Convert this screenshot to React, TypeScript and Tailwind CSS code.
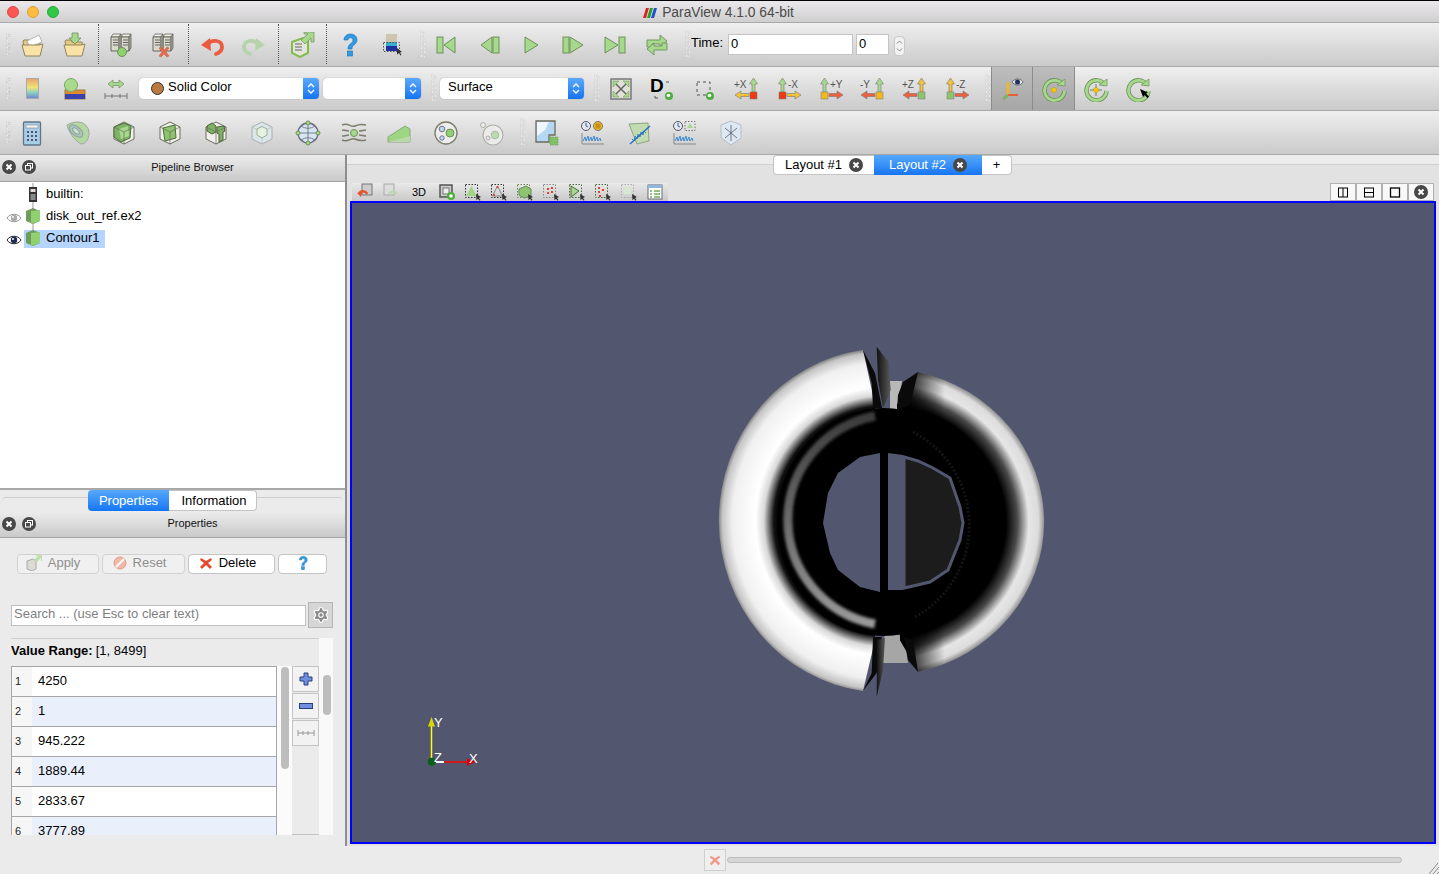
import type { ReactNode } from "react";
import { Settings } from "lucide-react";

const G = "#a6d98c";
const GS = "#6f8f5c";
const OL = "#7c7c6c";

function Ic({ children, s = 26 }: { children: ReactNode; s?: number }) {
  return (
    <svg width={s} height={s} viewBox="0 0 26 26" fill="none">
      {children}
    </svg>
  );
}

function Cell({ children, w = "w-[42px]" }: { children: ReactNode; w?: string }) {
  return <div className={`${w} shrink-0 flex items-center justify-center`}>{children}</div>;
}

function Handle({ className = "" }: { className?: string }) {
  return (
    <div className={`h-full shrink-0 flex items-center justify-end ${className}`}>
      <svg width="6" height="30" viewBox="0 0 6 30">
        {[0, 1, 2, 3, 4, 5, 6].map((i) => (
          <g key={i} fill="#f6f6f6" stroke="#c4c4c4" strokeWidth="0.4">
            <rect x={i % 2 ? 3.5 : 0.5} y={i * 4 + 1} width="2" height="2" />
            <rect x={i % 2 ? 0.5 : 3.5} y={i * 4 + 2} width="1.6" height="1.6" />
          </g>
        ))}
      </svg>
    </div>
  );
}

function Sep() {
  return (
    <div className="w-[6px] shrink-0 h-full flex justify-center">
      <div className="h-[40px] mt-[1px] border-l border-dotted border-[#555]" />
    </div>
  );
}

function Folder({ down }: { down?: boolean }) {
  return (
    <Ic>
      <path d="M4 9l1-1h5l1 2h10v13H6z" fill="#e8c77e" stroke="#8e8565" />
      {down ? (
        <path d="M11 1h6v5h3l-6 6-6-6h3z" fill={G} stroke={GS} strokeWidth="0.8" />
      ) : (
        <path d="M8 9l12-6 3 7-12 5z" fill="#fff" stroke="#999" strokeWidth="0.7" />
      )}
      <path d="M3 13h17l4-1-3 12H6z" fill="#fbe3a8" stroke="#8e8565" />
    </Ic>
  );
}

function Towers({ badge }: { badge?: "ok" | "x" }) {
  const t = (x: number) => (
    <g key={x}>
      <path d={`M${x} 5l2-3h8l-2 3z`} fill="#efefe8" stroke="#66665c" strokeWidth="0.8" />
      <path d={`M${x} 5h8v14h-8z`} fill="#d8d8cf" stroke="#66665c" />
      <path d={`M${x + 8} 5l2-3v14l-2 3z`} fill="#a8a89e" stroke="#66665c" strokeWidth="0.8" />
      <path d={`M${x + 2} 8h5M${x + 2} 10.500h5M${x + 2} 13h5`} stroke="#66665c" strokeWidth="1" />
    </g>
  );
  return (
    <Ic>
      {t(12)}
      {t(2)}
      {badge === "ok" && <circle cx="13" cy="20" r="4.500" fill="#8bd36a" stroke={GS} />}
      {badge === "x" && <path d="M8 16l2-1 3 3 3-3 2 1-3 4 3 4-2 1-3-3-3 3-2-1 3-4z" fill="#ea6a50" stroke="#b85a45" strokeWidth="0.5" />}
    </Ic>
  );
}

function Curved({ flip, color }: { flip?: boolean; color: string }) {
  return (
    <Ic>
      <g transform={flip ? "translate(26 0) scale(-1 1)" : undefined}>
        <path d="M9 12c4-5 14-4 14 3 0 4-3 6-6 7" stroke={color} strokeWidth="3.800" strokeLinecap="round" />
        <path d="M2 13l9-7 1 13z" fill={color} />
      </g>
    </Ic>
  );
}

function Question({ s = 26 }: { s?: number }) {
  return (
    <Ic s={s}>
      <path d="M7 8c0-8 13-8 13 0 0 5-5 4-5 9h-4c0-6 5-5 5-9 0-3-5-3-5 0z" fill="#2f9be6" stroke="#1b6fae" strokeWidth="0.6" />
      <rect x="10.500" y="19" width="5" height="5" fill="#2f9be6" stroke="#1b6fae" strokeWidth="0.6" />
    </Ic>
  );
}

function Vcr({ d, extra }: { d: string; extra?: ReactNode }) {
  return (
    <Ic>
      {extra}
      <path d={d} fill={G} stroke={GS} strokeWidth="1" />
    </Ic>
  );
}

function Axis({ label, up, horiz, box, right }: { label: string; up: string; horiz: string; box: string; right: boolean }) {
  // right: the vertical arrow stands on the right and the flat arrow points left
  return (
    <svg width="26" height="26" viewBox="0 0 26 26" fill="none">
      <g transform={right ? undefined : "translate(26 0) scale(-1 1)"}>
        <path d="M18 16V8h-2.500l4-6 4 6H21v8z" fill={up} stroke="#777" strokeWidth="0.6" />
        <path d="M15 17.500H7V15l-6 4 6 4v-2.500h8z" fill={horiz} stroke="#777" strokeWidth="0.6" />
        <rect x="16" y="16" width="7" height="7" fill={box} stroke="#777" strokeWidth="0.5" />
      </g>
      <text x={right ? 0 : 12} y="12" fontSize="10" fill="#555" fontFamily="Liberation Sans">
        {label}
      </text>
    </svg>
  );
}

function Cube({ kind }: { kind: "plain" | "tilt" | "extract" | "pale" }) {
  if (kind === "pale") {
    return (
      <Ic>
        <path d="M13 2l10 5v12l-10 5-10-5V7z" fill="#dbe6ec" stroke="#a8b0a8" />
        <path d="M3 7l10 5 10-5M13 12v12" stroke="#b8c0b8" strokeWidth="0.7" />
        <path d="M8 9l5-2.500 5 2.500v6l-5 3-5-3z" fill="#e7f1df" stroke="#9ab08f" />
      </Ic>
    );
  }
  return (
    <Ic>
      <path d="M13 2l10 5v12l-10 5-10-5V7z" fill="#f0f0ea" stroke="#6c6c5e" strokeWidth="1" />
      {kind === "plain" && <path d="M3 7l10-4 7 3-1 12-9 4-7-5z" fill="#7fb364" stroke="#4d6f3e" />}
      {kind === "plain" && <path d="M8 9l9-3 1 10-8 3z" fill={G} />}
      {kind === "tilt" && <path d="M6 8l12-3 1 13-11 3z" fill="#8cc470" stroke="#4d6f3e" />}
      {kind === "extract" && <path d="M4 6l5-3 4 3v6l-4 2-5-3zM14 7l7-1 1 5-2 1v8l-4 2v-8l-2-1z" fill="#7fb364" stroke="#4d5f3e" />}
      <path d="M3 7l10 5 10-5M13 12v12" stroke="#6c6c5e" strokeWidth="0.7" />
    </Ic>
  );
}

function Rotate({ inner }: { inner: ReactNode }) {
  return (
    <Ic>
      <path d="M22 9a10 10 0 1 0 1.500 6" stroke={GS} strokeWidth="4.400" />
      <path d="M22 9a10 10 0 1 0 1.500 6" stroke={G} strokeWidth="2.800" />
      <path d="M16 9l8 1V3z" fill={G} stroke={GS} strokeWidth="0.7" />
      {inner}
    </Ic>
  );
}

function CloseDot({ s = 14 }: { s?: number }) {
  return (
    <svg width={s} height={s} viewBox="0 0 14 14">
      <circle cx="7" cy="7" r="7" fill="#484848" />
      <path d="M4.500 4.500l5 5M9.500 4.500l-5 5" stroke="#fff" strokeWidth="2" />
    </svg>
  );
}

function DockHead({ title, h }: { title: string; h: string }) {
  return (
    <div className={`${h} shrink-0 flex items-center pb-[2px] bg-linear-to-b from-[#ececec] to-[#c9c9c9] border-b border-[#a5a5a5]`}>
      <div className="w-[40px] shrink-0 flex items-center gap-[6px] pl-[2px]">
        <CloseDot />
        <svg width="14" height="14" viewBox="0 0 14 14">
          <circle cx="7" cy="7" r="7" fill="#484848" />
          <rect x="5.500" y="3.500" width="5" height="4.500" fill="none" stroke="#fff" />
          <rect x="3.500" y="5.500" width="5" height="4.500" fill="#484848" stroke="#fff" />
        </svg>
      </div>
      <div className="flex-1 text-center text-[11px] text-[#111]">{title}</div>
    </div>
  );
}

function Eye({ on }: { on?: boolean }) {
  return (
    <svg width="16" height="12" viewBox="0 0 16 12">
      <path d="M1 6c3-5 11-5 14 0-3 5-11 5-14 0z" fill="#fff" stroke={on ? "#223" : "#999"} />
      <circle cx="8" cy="6" r="3.200" fill={on ? "#1e2a50" : "#aaa"} />
      <circle cx="7" cy="5" r="1" fill="#fff" />
    </svg>
  );
}

function TreeCube({ last }: { last?: boolean }) {
  return (
    <svg width="16" height="22" viewBox="0 0 16 22">
      <path d={last ? "M8 0v8" : "M8 0v22"} stroke="#999" />
      <path d="M8 3l7 3v10l-7 3-7-3V6z" fill="#6f9c58" />
      <path d="M6 6l9-1v11l-9 3z" fill="#8fd070" />
    </svg>
  );
}

function Combo({ w, pad, children }: { w: string; pad: string; children: ReactNode }) {
  return (
    <div className={`${w} h-[21px] shrink-0 flex rounded-[4px] bg-white shadow-[0_0_1px_#777] overflow-hidden`}>
      <div className={`flex-1 flex items-center text-[13px] text-black pb-[3px] gap-[4px] ${pad}`}>{children}</div>
      <div className="w-[16px] bg-linear-to-b from-[#5aa9fb] to-[#1273f2] flex items-center justify-center">
        <svg width="8" height="13" viewBox="0 0 8 13" fill="none" stroke="#fff" strokeWidth="1.300">
          <path d="M1 5l3-3 3 3M1 8l3 3 3-3" />
        </svg>
      </div>
    </div>
  );
}

function PropBtn({ w, dim, pr = "", children }: { w: string; dim?: boolean; pr?: string; children: ReactNode }) {
  return (
    <div
      className={`${w} h-[20px] shrink-0 rounded-[4px] border flex items-center justify-center gap-[6px] text-[13px] pb-[2px] ${pr} ${
        dim ? "border-[#d2d2d2] bg-[#f0f0f0] text-[#8f8f8f]" : "border-[#c4c4c4] bg-white text-black"
      }`}
    >
      {children}
    </div>
  );
}

function ViewIcon({ children }: { children: ReactNode }) {
  return <div className="w-[26px] shrink-0 flex items-center justify-center">{children}</div>;
}

function SelBox({ fill, cursor = true, dots = "#333", children }: { fill?: string; cursor?: boolean; dots?: string; children?: ReactNode }) {
  return (
    <svg width="18" height="18" viewBox="0 0 18 18" fill="none">
      <rect x="1.500" y="1.500" width="12" height="13" stroke={dots} strokeDasharray="1.500 1.500" />
      {fill && <path d="M7.500 3l5 10h-10z" fill={fill} />}
      {children}
      {cursor && <path d="M12 11l5 3-2 1 1.500 2-1 .7-1.500-2-1.500 1.500z" fill="#333" />}
    </svg>
  );
}

const rows = ["4250", "1", "945.222", "1889.44", "2833.67", "3777.89"];

function Model() {
  return (
    <svg className="block w-full h-full" viewBox="352 203 1082 639">
      <defs>
        <radialGradient id="lb" gradientUnits="userSpaceOnUse" cx="885" cy="521" r="166" gradientTransform="translate(885 521) scale(1 1.036) translate(-885 -521)">
          <stop offset="0.64" stopColor="#000" />
          <stop offset="0.67" stopColor="#111" />
          <stop offset="0.73" stopColor="#d8d8d8" />
          <stop offset="0.78" stopColor="#fff" />
          <stop offset="0.92" stopColor="#f0f0f0" />
          <stop offset="0.98" stopColor="#c4c4c4" />
          <stop offset="1" stopColor="#8a8a8a" />
        </radialGradient>
        <radialGradient id="rb" gradientUnits="userSpaceOnUse" cx="882" cy="522" r="163" gradientTransform="translate(882 522) scale(1 0.945) translate(-882 -522)">
          <stop offset="0.76" stopColor="#000" />
          <stop offset="0.83" stopColor="#4a4a4a" />
          <stop offset="0.9" stopColor="#e6e6e6" />
          <stop offset="0.96" stopColor="#dcdcdc" />
          <stop offset="1" stopColor="#888" />
        </radialGradient>
        <linearGradient id="rd" gradientUnits="userSpaceOnUse" x1="905" y1="0" x2="945" y2="0">
          <stop offset="0" stopColor="#000" stopOpacity="0.95" />
          <stop offset="1" stopColor="#000" stopOpacity="0" />
        </linearGradient>
        <linearGradient id="fin" x1="0" y1="0" x2="1" y2="0">
          <stop offset="0" stopColor="#111" />
          <stop offset="1" stopColor="#5a5a5a" />
        </linearGradient>
        <linearGradient id="arc" x1="0" y1="0" x2="0" y2="1">
          <stop offset="0" stopColor="#3c3c3c" />
          <stop offset="0.5" stopColor="#6a6a6a" />
          <stop offset="1" stopColor="#999" />
        </linearGradient>
        <filter id="soft">
          <feGaussianBlur stdDeviation="1.500" />
        </filter>
      </defs>

      <path d="M890 381L902 381L898 410L890 410z" fill="#b8b8b8" />
      <path d="M877 663L908 663L904 635L885 635z" fill="#a6a6a6" />
      <path d="M863 350A166 172 0 0 0 863 691L875 640L875 405z" fill="url(#lb)" />
      <path d="M918 372A163 154 0 0 1 918 672L900 640L897 405z" fill="url(#rb)" />
      <path d="M918 372A163 154 0 0 1 918 672L900 640L897 405z" fill="url(#rd)" />
      <ellipse cx="883" cy="522" rx="106" ry="114" fill="#000" />
      <path d="M875 416A108 106 0 0 0 875 624" fill="none" stroke="url(#arc)" strokeWidth="9" filter="url(#soft)" />
      <path d="M913 432A105 105 0 0 1 913 618" fill="none" stroke="#141414" strokeWidth="3" strokeDasharray="2 2" />
      <path d="M880 453L860 457L838 473L828 493L823 523L830 553L838 570L860 587L880 592z" fill="#52566f" />
      <path d="M888 453L903 455L903 590L888 590z" fill="#52566f" />
      <path d="M904 457L918 461L933 468L950 478L960 507L963 523L960 540L948 570L930 582L904 588z" fill="#1c1c1c" stroke="#52566f" strokeWidth="3" />
      <path d="M880 453L885 451L888 456L887 520L888 590L885 593L880 592L881 520z" fill="#000" />
      <path d="M863 350L875 373L882 408L873 408L871.700 383z" fill="#0a0a0a" />
      <path d="M876.700 346.700L888.300 361.700L890.700 390L883 408L878 380z" fill="url(#fin)" />
      <path d="M918 372L903 382L898 395L897 410L910 405z" fill="#0a0a0a" />
      <path d="M863 690.700L871.700 673L873 637L881.700 637L876.700 673z" fill="#0a0a0a" />
      <path d="M876.700 697L883 670L885 638L877 640L877 660z" fill="url(#fin)" />
      <path d="M918 672L908 660L904 637L913 640z" fill="#0a0a0a" />

      <path d="M431.500 761V725" stroke="#ffff00" strokeWidth="1.500" />
      <path d="M431.500 717l3.500 9.500h-7z" fill="#d8d800" />
      <path d="M436 762H444" stroke="#fff" strokeWidth="2" />
      <path d="M444 762H468" stroke="#ff0000" strokeWidth="1.500" />
      <path d="M476 762l-9 3.500v-7z" fill="#d80000" />
      <circle cx="431.700" cy="761.700" r="4" fill="#0b6018" />
      <g fill="#fff" fontSize="13" fontFamily="Liberation Sans">
        <text x="434" y="727">Y</text>
        <text x="434" y="762">Z</text>
        <text x="469" y="763">X</text>
      </g>
    </svg>
  );
}

export default function App() {
  return (
    <div className="w-[1439px] h-[874px] flex flex-col overflow-hidden font-['Liberation_Sans',Arial,sans-serif] bg-[#ebebeb]">
      {/* title bar */}
      <div className="h-[23px] shrink-0 grid grid-cols-[1fr_auto_1fr] items-center border-t border-black bg-linear-to-b from-[#eae8ea] to-[#d0cfd0] border-b-[1px] border-b-[#a9a9a9]">
        <div className="flex gap-2 pl-[7px]">
          <div className="w-[12px] h-[12px] rounded-full bg-[#fc5753] border border-[#df4744]" />
          <div className="w-[12px] h-[12px] rounded-full bg-[#fdbc40] border border-[#de9f34]" />
          <div className="w-[12px] h-[12px] rounded-full bg-[#33c748] border border-[#27aa35]" />
        </div>
        <div className="flex items-center gap-[5px] text-[13.8px] text-[#4a4a4a] pr-[2px] pt-[2px]">
          <svg width="14" height="10" viewBox="0 0 14 10">
            <path d="M0 10L3 0h3L3 10z" fill="#e02020" />
            <path d="M4 10L7 0h3L7 10z" fill="#25a02a" />
            <path d="M8 10l3-10h3l-3 10z" fill="#2050c8" />
          </svg>
          ParaView 4.1.0 64-bit
        </div>
        <div />
      </div>

      {/* main toolbar */}
      <div className="h-[44px] shrink-0 flex items-center pl-[6px] bg-linear-to-b from-[#efefef] to-[#cacaca] border-b border-[#a8a8a8]">
        <Handle className="w-[5px]" />
        <Cell><Folder /></Cell>
        <Cell><Folder down /></Cell>
        <Sep />
        <Cell><Towers badge="ok" /></Cell>
        <Cell><Towers badge="x" /></Cell>
        <Sep />
        <Cell><Curved color="#ea5b3f" /></Cell>
        <Cell><Curved flip color="#b6d3ab" /></Cell>
        <Sep />
        <Cell>
          <Ic>
            <path d="M3 10l11-4 5 3v12l-8 4-8-4z" fill="#e4e4dc" stroke="#7fbe4c" strokeWidth="2" />
            <path d="M6 12h7M6 15h7M6 18h7" stroke="#666" />
            <path d="M12 8l7-6h-4V0h10v10h-3V6l-6 6z" fill={G} stroke={GS} strokeWidth="0.7" />
          </Ic>
        </Cell>
        <Sep />
        <Cell><Question /></Cell>
        <Cell>
          <Ic>
            <rect x="7" y="2" width="11" height="8" fill="#cdc5ae" />
            <rect x="7" y="10" width="11" height="4" fill="#35b0d0" />
            <rect x="7" y="14" width="11" height="5" fill="#2030a0" />
            <rect x="4.500" y="10.500" width="16" height="9" stroke="#555" strokeDasharray="1.500 1.500" />
            <path d="M18 16l5 4-2 .5 1.500 2.500-1 .5-1.500-2.500-2 1.500z" fill="#333" />
          </Ic>
        </Cell>
        <Handle className="w-[13px]" />
        <Cell><Vcr d="M21 5v16L10 13z" extra={<rect x="3" y="5" width="6" height="16" fill={G} stroke={GS} />} /></Cell>
        <Cell><Vcr d="M16 5v16L5 13z" extra={<rect x="17" y="5" width="6" height="16" fill={G} stroke={GS} />} /></Cell>
        <Cell><Vcr d="M7 5v16l13-8z" /></Cell>
        <Cell><Vcr d="M10 5v16l13-8z" extra={<rect x="3" y="5" width="6" height="16" fill={G} stroke={GS} />} /></Cell>
        <Cell><Vcr d="M3 5v16l13-8z" extra={<rect x="17" y="5" width="6" height="16" fill={G} stroke={GS} />} /></Cell>
        <Cell>
          <Ic>
            <path d="M3 15V8h13V3l7 6-7 6v-3H8v3z" fill={G} stroke={GS} strokeWidth="0.9" />
            <path d="M23 11v7H10v5l-7-6 7-6v3h8v-3z" fill={G} stroke={GS} strokeWidth="0.9" />
          </Ic>
        </Cell>
        <Handle className="w-[13px]" />
        <div className="w-[37px] shrink-0 text-[13px] text-black pb-[3px]">Time:</div>
        <div className="w-[125px] h-[21px] shrink-0 bg-white border border-[#c4c4c4] text-[13px] text-black pl-[2px] leading-[17px]">0</div>
        <div className="ml-[3px] w-[33px] h-[21px] shrink-0 bg-white border border-[#c4c4c4] text-[13px] text-black pl-[2px] leading-[17px]">0</div>
        <div className="ml-[5px] w-[11px] h-[20px] shrink-0 mt-[2px] rounded-[4px] bg-[#f2f2f2] border border-[#c8c8c8] flex items-center justify-center">
          <svg width="7" height="14" viewBox="0 0 7 14" fill="none" stroke="#888">
            <path d="M1 4.500L3.500 2 6 4.500M1 9.500L3.500 12 6 9.500" />
          </svg>
        </div>
      </div>

      {/* display toolbar */}
      <div className="h-[44px] shrink-0 flex items-center pl-[6px] bg-linear-to-b from-[#efefef] to-[#cacaca] border-b border-[#a8a8a8]">
        <Handle className="w-[5px]" />
        <Cell>
          <svg width="13" height="21" viewBox="0 0 13 21">
            <defs>
              <linearGradient id="cm" x1="0" y1="0" x2="0" y2="1">
                <stop offset="0" stopColor="#e3a56a" />
                <stop offset="0.45" stopColor="#f3e27a" />
                <stop offset="0.7" stopColor="#8bd3c0" />
                <stop offset="1" stopColor="#7080d8" />
              </linearGradient>
            </defs>
            <rect x="0.500" y="0.500" width="12" height="20" fill="url(#cm)" stroke="#aaa" />
          </svg>
        </Cell>
        <Cell>
          <Ic>
            <rect x="4" y="14" width="20" height="9" fill="#e08a30" stroke="#a07a40" />
            <rect x="4" y="18" width="20" height="5" fill="#3a40b0" />
            <circle cx="10" cy="9" r="6.500" fill="#a8dc8c" stroke="#79a763" />
          </Ic>
        </Cell>
        <Cell>
          <Ic>
            <path d="M5 8l5-4v2.500h6V4l5 4-5 4V9.500h-6V12z" fill={G} stroke={GS} strokeWidth="0.7" />
            <path d="M2 17v6M2 20h22M9 18v4M17 18v4M24 17v6" stroke="#777" />
          </Ic>
        </Cell>
        <div className="ml-[2px]" />
        <Combo w="w-[180px]" pad="pl-[12px]">
          <span className="w-[13px] h-[13px] mt-[3px] rounded-full bg-[#b97a3f] border border-[#333]" />
          Solid Color
        </Combo>
        <div className="ml-[4px]" />
        <Combo w="w-[98px]" pad="pl-[9px]">{""}</Combo>
        <Handle className="w-[19px] pr-[3px]" />
        <Combo w="w-[144px]" pad="pl-[8px]">Surface</Combo>
        <Handle className="w-[16px]" />
        <Cell>
          <Ic>
            <rect x="3" y="3" width="20" height="20" fill="#e0e0d8" stroke="#777" strokeWidth="1.500" />
            <path d="M6 6l14 14M20 6L6 20" stroke="#666" strokeWidth="1.500" />
            <path d="M5 5h6l-6 6zM21 5v6l-6-6zM5 21v-6l6 6zM21 21h-6l6-6z" fill={G} stroke={GS} strokeWidth="0.5" />
          </Ic>
        </Cell>
        <Cell>
          <svg width="26" height="26" viewBox="0 0 26 26" fill="none" className="overflow-visible">
            <text x="0" y="16" fontSize="19" fontWeight="700" fill="#000" fontFamily="Liberation Sans">D</text>
            <path d="M16 6h3M5 20v2h3" stroke="#555" />
            <circle cx="19" cy="20" r="4" fill="#4caf3c" />
            <circle cx="18.500" cy="19.500" r="1.800" fill="#fff" />
          </svg>
        </Cell>
        <Cell>
          <Ic>
            <rect x="5" y="6" width="13" height="13" stroke="#555" strokeDasharray="3 3" />
            <circle cx="18" cy="20" r="4" fill="#4caf3c" />
            <circle cx="17.500" cy="19.500" r="1.800" fill="#fff" />
          </Ic>
        </Cell>
        <Cell><Axis label="+X" up={G} horiz="#f3c23a" box="#ee3a12" right /></Cell>
        <Cell><Axis label="-X" up={G} horiz="#f3c23a" box="#ee3a12" right={false} /></Cell>
        <Cell><Axis label="+Y" up={G} horiz="#ee6040" box="#f3b81e" right={false} /></Cell>
        <Cell><Axis label="-Y" up={G} horiz="#ee6040" box="#f3b81e" right /></Cell>
        <Cell><Axis label="+Z" up="#f3c23a" horiz="#ee6040" box="#8cc470" right /></Cell>
        <Cell><Axis label="-Z" up="#f3c23a" horiz="#ee6040" box="#8cc470" right={false} /></Cell>
        <Handle className="w-[13px]" />
        <div className="h-full w-[42px] shrink-0 flex items-center justify-center bg-linear-to-b from-[#bdbdbd] to-[#a6a6a6] border-l border-r border-[#8c8c8c]">
          <Ic>
            <path d="M9 19V6" stroke="#e8b830" strokeWidth="3" />
            <path d="M9 19h10" stroke="#e8603a" strokeWidth="2" />
            <path d="M9 19l-5 4" stroke="#7fb364" strokeWidth="3" />
            <path d="M13 6c3-4 9-4 11 0-2 4-8 4-11 0z" fill="#dfe6f0" stroke="#333" strokeWidth="0.6" />
            <circle cx="18.500" cy="6" r="2.500" fill="#22305a" />
          </Ic>
        </div>
        <div className="h-full w-[42px] shrink-0 flex items-center justify-center bg-linear-to-b from-[#bdbdbd] to-[#a6a6a6] border-r border-[#8c8c8c]">
          <Rotate inner={<circle cx="13" cy="14" r="2.500" fill="#ffc800" stroke="#b09020" strokeWidth="0.5" />} />
        </div>
        <Cell>
          <Rotate inner={<g><path d="M13 8v12M7 14h12" stroke="#777" /><circle cx="13" cy="14" r="2.500" fill="#ffc800" stroke="#b09020" strokeWidth="0.5" /></g>} />
        </Cell>
        <Cell>
          <Rotate inner={<path d="M15 13l3 8 1.500-2 3 3 1.500-1.500-3-3 2-1z" fill="#000" />} />
        </Cell>
      </div>

      {/* filters toolbar */}
      <div className="h-[44px] shrink-0 flex items-center pl-[6px] bg-linear-to-b from-[#efefef] to-[#cacaca] border-b border-[#a8a8a8]">
        <Handle className="w-[5px] mr-[-2px]" />
        <Cell w="w-[46px]">
          <Ic>
            <rect x="4.500" y="2" width="17" height="23" rx="1" fill="#a8cde8" stroke="#5f7585" strokeWidth="1.300" />
            <rect x="7" y="5" width="12" height="3" fill="#f2f2f2" stroke="#777" strokeWidth="0.5" />
            <path d="M8 11h2v2H8zM12 11h2v2h-2zM16 11h2v2h-2zM8 15h2v2H8zM12 15h2v2h-2zM16 15h2v2h-2zM8 19h2v2H8zM12 19h2v2h-2zM16 19h2v2h-2z" fill="#556" />
          </Ic>
        </Cell>
        <Cell w="w-[46px]">
          <Ic>
            <path d="M13 2a11 11 0 0 1 11 11c0 7-4 11-8 11C9 20 3 11 2 5c3-2 7-3 11-3z" fill="#b4d8a2" stroke="#a0a8a0" />
            <ellipse cx="11" cy="11" rx="8" ry="4.500" transform="rotate(40 11 11)" fill="#a9c6c0" stroke="#8f9f95" />
            <ellipse cx="11" cy="11" rx="4" ry="2" transform="rotate(40 11 11)" fill="#cfe2d0" stroke="#8f9f95" />
          </Ic>
        </Cell>
        <Cell w="w-[46px]"><Cube kind="plain" /></Cell>
        <Cell w="w-[46px]"><Cube kind="tilt" /></Cell>
        <Cell w="w-[46px]"><Cube kind="extract" /></Cell>
        <Cell w="w-[46px]"><Cube kind="pale" /></Cell>
        <Cell w="w-[46px]">
          <Ic>
            <circle cx="13" cy="13" r="10" fill="#d5e5f2" stroke="#667" strokeWidth="1.300" />
            <path d="M3 13h20M13 3v20M6 6c5 3 9 3 14 0M6 20c5-3 9-3 14 0" stroke="#667" strokeWidth="0.8" />
            <circle cx="13" cy="3" r="2" fill={G} stroke={GS} />
            <circle cx="13" cy="23" r="2" fill={G} stroke={GS} />
            <circle cx="3" cy="13" r="2" fill={G} stroke={GS} />
            <circle cx="23" cy="13" r="2" fill={G} stroke={GS} />
          </Ic>
        </Cell>
        <Cell w="w-[46px]">
          <Ic>
            <path d="M1 5c6-3 9 3 13 1 4-2 7-2 11-1M1 20c6 3 9-3 13-1 4 2 7 2 11 1M1 10c4 0 4 1 7 1M18 11c3 0 4-1 7-1M1 16c4 0 4-1 7-1M18 15c3 0 4 1 7 1" stroke={OL} strokeWidth="1.500" />
            <circle cx="13" cy="13" r="3.500" fill={G} stroke={GS} />
          </Ic>
        </Cell>
        <Cell w="w-[46px]">
          <Ic>
            <path d="M1 17l17-11 5 3v13H1z" fill="#9ed583" stroke="#8aa880" />
            <path d="M1 22h22V16z" fill="#b9d8a8" />
          </Ic>
        </Cell>
        <Cell w="w-[46px]">
          <Ic>
            <circle cx="13" cy="13" r="11" fill="#ededed" stroke={OL} strokeWidth="1.300" />
            <circle cx="9" cy="9" r="2.800" fill="#bcd8ee" stroke="#778" />
            <circle cx="9" cy="18" r="2.200" fill="#bcd8ee" stroke="#778" />
            <circle cx="17" cy="13" r="4" fill="#8fd070" stroke="#6f8f5c" />
          </Ic>
        </Cell>
        <Cell w="w-[46px]">
          <Ic>
            <circle cx="14" cy="15" r="10" fill="#ebebeb" stroke="#b0b0a8" strokeWidth="1.200" />
            <circle cx="4" cy="5" r="2.500" fill="#ececec" stroke="#b0b0a8" />
            <circle cx="9" cy="18" r="2" fill="#e4e4e4" stroke="#b0b0a8" />
            <circle cx="16" cy="15" r="3.800" fill="#bcdcae" stroke="#a8b8a0" />
          </Ic>
        </Cell>
        <Handle className="w-[11px] mr-[-2px]" />
        <Cell w="w-[46px]">
          <Ic>
            <path d="M2 1h19v14h-6v7H2z" fill="#b5d8f2" stroke="#6c6c5c" strokeWidth="1.300" />
            <path d="M3 2h12l-4 8-8 6z" fill="#eff6fc" />
            <rect x="16" y="17" width="8" height="8" fill="#7fc268" stroke="#7f9f70" strokeDasharray="1.500 1" />
          </Ic>
        </Cell>
        <Cell w="w-[46px]">
          <Ic>
            <circle cx="6" cy="6" r="4.500" fill="#e4e8ee" stroke="#556" />
            <path d="M6 3v3l2 1" stroke="#3a5a98" />
            <circle cx="18" cy="6" r="4.500" fill="#f0b820" stroke="#777" />
            <rect x="15.500" y="3.500" width="5" height="5" fill="#c89010" />
            <path d="M2 13v11h22" stroke="#888" />
            <path d="M3 21l2-4 1 4 2-5 1 5 2-4 1 4 2-5 1 5 2-4 1 4 2-3 1 3" stroke="#3a88d0" />
          </Ic>
        </Cell>
        <Cell w="w-[46px]">
          <Ic>
            <path d="M3 4l19-1 1 18-12 3z" fill="#c0dcb0" stroke="#8fa585" />
            <path d="M4 24L24 6" stroke="#2a70c8" strokeWidth="1.500" />
            <path d="M6 19l2 2 1-5 2 3 1-5 2 3 1-5 2 3 1-4 2 2" stroke="#2a70c8" strokeWidth="0.8" />
          </Ic>
        </Cell>
        <Cell w="w-[46px]">
          <Ic>
            <circle cx="6" cy="6" r="4.500" fill="#e4e8ee" stroke="#556" />
            <path d="M6 3v3l2 1" stroke="#3a5a98" />
            <rect x="13" y="1.500" width="10" height="9" stroke="#777" strokeDasharray="1.500 1.500" />
            <path d="M18 3l3 5h-6z" fill={G} />
            <path d="M2 13v11h22" stroke="#888" />
            <path d="M3 21l2-4 1 4 2-5 1 5 2-4 1 4 2-5 1 5 2-4 1 4 2-3 1 3" stroke="#3a88d0" />
          </Ic>
        </Cell>
        <Cell w="w-[46px]">
          <Ic>
            <path d="M13 1l10 4v13l-10 7-10-7V5z" fill="#dce8f2" stroke="#b5bec5" />
            <path d="M7 8l12 10M19 8L7 18M13 5v16" stroke="#667" strokeWidth="0.9" />
          </Ic>
        </Cell>
      </div>

      {/* body */}
      <div className="h-[691px] shrink-0 flex">
        {/* left docks */}
        <div className="w-[347px] shrink-0 flex flex-col border-r-2 border-[#8e8e8e]">
          <DockHead title="Pipeline Browser" h="h-[27px]" />
          <div className="h-[308px] shrink-0 bg-white border-b-2 border-[#a8a8a8] text-[13px] text-black">
            <div className="h-[22px] flex items-center pl-[25px] pt-[2px]">
              <svg width="16" height="22" viewBox="0 0 16 22">
                <path d="M8 0v22" stroke="#999" />
                <rect x="4" y="4" width="8" height="15" fill="#333" />
                <rect x="5.500" y="6" width="5" height="3" fill="#ddd" />
                <rect x="5.500" y="11" width="5" height="6" fill="#888" />
              </svg>
              <span className="ml-[5px]">builtin:</span>
            </div>
            <div className="h-[22px] flex items-center pl-[6px] pt-[2px]">
              <div className="w-[19px] pt-[3px]"><Eye /></div>
              <TreeCube />
              <span className="ml-[5px]">disk_out_ref.ex2</span>
            </div>
            <div className="h-[22px] flex items-start pl-[6px]">
              <div className="w-[18px] pt-[8px]"><Eye on /></div>
              <div className="h-[18px] w-[81px] mt-[4px] flex items-center pl-[1px] pb-[3px] bg-[#b5d5ff]">
                <TreeCube last />
                <span className="ml-[5px]">Contour1</span>
              </div>
            </div>
          </div>

          <div className="h-[22px] shrink-0 flex justify-center bg-[#ebebeb] pr-[2px]">
            <div className="flex-1 mt-[7px] ml-[2px] rounded-tl-[4px] border-t border-[#cfcfcf]" />
            <div className="w-[81px] h-[21px] rounded-l-[4px] bg-linear-to-b from-[#56a8fb] to-[#1375f3] text-white text-[13px] flex items-center justify-center">Properties</div>
            <div className="w-[88px] h-[21px] pl-[3px] rounded-r-[4px] bg-white border border-l-0 border-[#c4c4c4] text-black text-[13px] flex items-center justify-center">Information</div>
            <div className="flex-1 mt-[7px] rounded-tr-[4px] border-t border-[#cfcfcf]" />
          </div>
          <DockHead title="Properties" h="h-[26px]" />

          <div className="flex-1 bg-[#ebebeb] overflow-hidden">
            <div className="flex mt-[16px] ml-[17px] gap-[3px]">
              <PropBtn w="w-[82px]" dim pr="pr-[10px]">
                <svg width="16" height="16" viewBox="0 0 16 16">
                  <path d="M1 6l6-2 3 2v8l-4 2-5-2z" fill="#dcdcd4" stroke="#aaa" />
                  <path d="M8 5l4-4h-2V0h6v6h-1V3l-4 4z" fill="#bfe0ad" />
                </svg>
                Apply
              </PropBtn>
              <PropBtn w="w-[83px]" dim pr="pr-[8px]">
                <svg width="14" height="14" viewBox="0 0 14 14">
                  <circle cx="7" cy="7" r="6" fill="#f3b7a8" stroke="#e09a88" />
                  <path d="M3 11l8-8" stroke="#fff" strokeWidth="2" />
                </svg>
                Reset
              </PropBtn>
              <PropBtn w="w-[87px]" pr="pr-[8px]">
                <svg width="14" height="14" viewBox="0 0 14 14">
                  <path d="M2 2l5 3 5-3 1 2-4 3 4 4-2 2-4-4-4 4-2-2 4-4-4-3z" fill="#e8482a" />
                </svg>
                Delete
              </PropBtn>
              <PropBtn w="w-[49px]"><Question s={16} /></PropBtn>
            </div>

            <div className="flex items-center mt-[28px] ml-[11px]">
              <div className="w-[295px] h-[21px] bg-white border border-[#c0c0c0] text-[13px] text-[#808080] pl-[2px] leading-[16px]">Search ... (use Esc to clear text)</div>
              <div className="ml-[2px] w-[25px] h-[26px] bg-[#d6d6d6] border border-[#b5b5b5] flex items-center justify-center">
                <Settings size={18} color="#fff" fill="#8a8a8a" strokeWidth={1.500} />
              </div>
            </div>

            <div className="mt-[10px] ml-[11px] w-[322px] h-[197px] flex overflow-hidden">
              <div className="w-[308px] shrink-0 border-t border-[#cfcfcf]">
                <div className="h-[27px] flex items-center text-[13px] text-black pb-[4px]">
                  <span className="font-bold">Value Range:</span>
                  <span className="ml-[3px]">[1, 8499]</span>
                </div>
                <div className="flex">
                  <div className="w-[266px] shrink-0 border-t border-l border-r border-[#a6a6a6]">
                    {rows.map((r, i) => (
                      <div key={r} className="h-[30px] flex border-b border-[#a6a6a6]">
                        <div className="w-[20px] shrink-0 bg-[#f6f6f6] text-[11px] text-[#222] flex items-center pl-[3px]">{i + 1}</div>
                        <div className={`flex-1 flex items-center text-[13px] text-black pl-[6px] pb-[2px] ${i % 2 ? "bg-[#e9f0fc]" : "bg-white"}`}>{r}</div>
                      </div>
                    ))}
                  </div>
                  <div className="w-[15px] shrink-0 bg-[#fbfbfb] pl-[4px] pt-[1px]">
                    <div className="w-[8px] h-[102px] rounded-full bg-[#bdbdbd]" />
                  </div>
                  <div className="w-[27px] shrink-0 flex flex-col gap-[1px] bg-[#ebebeb]">
                    <div className="h-[26px] bg-[#f2f2f2] border border-[#c4c4c4] flex items-center justify-center">
                      <svg width="14" height="14" viewBox="0 0 14 14">
                        <path d="M5 1h4v4h4v4H9v4H5V9H1V5h4z" fill="#6f8fe0" stroke="#2a3f80" />
                      </svg>
                    </div>
                    <div className="h-[26px] bg-[#f2f2f2] border border-[#c4c4c4] flex items-center justify-center">
                      <svg width="14" height="6" viewBox="0 0 14 6">
                        <rect x="0.500" y="0.500" width="13" height="5" fill="#6f8fe0" stroke="#2a3f80" />
                      </svg>
                    </div>
                    <div className="h-[26px] bg-[#f2f2f2] border border-[#c4c4c4] flex items-center justify-center">
                      <svg width="18" height="6" viewBox="0 0 18 6" fill="none" stroke="#999">
                        <path d="M1 0v6M1 3h16M6 1v4M11 1v4M17 0v6" />
                      </svg>
                    </div>
                    <div className="mt-[87px] h-[20px] bg-[#f2f2f2] border border-[#c4c4c4]" />
                  </div>
                </div>
              </div>
              <div className="w-[14px] shrink-0 bg-[#f9f9f9] pl-[4px] pt-[37px]">
                <div className="w-[8px] h-[40px] rounded-full bg-[#bdbdbd]" />
              </div>
            </div>
          </div>
        </div>

        {/* render area */}
        <div className="flex-1 flex flex-col bg-[#e2e2e2]">
          <div className="h-[10px] shrink-0 bg-[#ececec] border-b border-[#cfcfcf]" />
          <div className="h-[20px] -mt-[10px] shrink-0 flex justify-center pr-[1px]">
            <div className="w-[101px] rounded-l-[4px] bg-white border border-r-0 border-[#c4c4c4] text-black text-[13px] flex items-center justify-center gap-[7px]">
              Layout #1 <CloseDot />
            </div>
            <div className="w-[108px] bg-linear-to-b from-[#56a8fb] to-[#1375f3] text-white text-[13px] flex items-center justify-center gap-[7px]">
              Layout #2 <CloseDot />
            </div>
            <div className="w-[30px] rounded-r-[4px] bg-white border border-l-0 border-[#c4c4c4] text-black text-[13px] flex items-center justify-center">+</div>
          </div>

          <div className="mt-[8px] h-[18px] shrink-0 flex justify-between pl-[5px] pr-[5px]">
            <div className="flex h-[18px] bg-linear-to-b from-[#e9e9e9] to-[#c9c9c9]">
              <ViewIcon>
                <svg width="18" height="18" viewBox="0 0 18 18">
                  <rect x="6" y="1" width="10" height="11" fill="#ccc" stroke="#777" />
                  <path d="M3 11c2-4 7-3 8 0" stroke="#e8502e" strokeWidth="2.500" fill="none" />
                  <path d="M1 10l5-1-1 5z" fill="#e8502e" />
                </svg>
              </ViewIcon>
              <ViewIcon>
                <svg width="18" height="18" viewBox="0 0 18 18">
                  <rect x="2" y="1" width="10" height="11" fill="#ddd" stroke="#aaa" />
                  <path d="M7 11c2-3 6-3 8 0" stroke="#bcd8b0" strokeWidth="2.500" fill="none" />
                </svg>
              </ViewIcon>
              <div className="w-[26px] mx-[2px] shrink-0 flex items-center justify-center text-[11px] text-black">3D</div>
              <ViewIcon>
                <svg width="18" height="18" viewBox="0 0 18 18">
                  <rect x="2" y="2" width="12" height="12" fill="#ccc" stroke="#555" strokeWidth="1.500" />
                  <rect x="5" y="5" width="6" height="6" fill="#eee" stroke="#777" />
                  <circle cx="13" cy="13" r="4" fill="#4caf3c" />
                  <circle cx="13" cy="13" r="1.800" fill="#fff" />
                </svg>
              </ViewIcon>
              <ViewIcon><SelBox fill="#9ed583" /></ViewIcon>
              <ViewIcon>
                <SelBox>
                  <path d="M7.500 3l5 10h-10z" stroke="#888" />
                  <circle cx="7.500" cy="4" r="1" fill="#e8302a" />
                  <circle cx="4" cy="12" r="1" fill="#e8302a" />
                </SelBox>
              </ViewIcon>
              <ViewIcon>
                <SelBox dots="#6a8a5a">
                  <path d="M3 6l7-3 5 3v7l-7 2-5-3z" fill="#8cc470" stroke="#6a8a5a" />
                </SelBox>
              </ViewIcon>
              <ViewIcon>
                <SelBox dots="#888">
                  <path d="M5 5h2v2H5zM9 4h2v2H9zM5 9h2v2H5zM9 8h2v2H9z" fill="#e8402a" />
                </SelBox>
              </ViewIcon>
              <ViewIcon>
                <SelBox dots="#4a6a3a">
                  <path d="M3 3l8 5-8 6z" fill="#a8d890" stroke="#4a6a3a" />
                </SelBox>
              </ViewIcon>
              <ViewIcon>
                <SelBox dots="#4a6a3a">
                  <path d="M4 4h2v2H4zM4 8h2v2H4zM8 6h2v2H8zM5 12h2v2H5z" fill="#e8402a" />
                </SelBox>
              </ViewIcon>
              <ViewIcon>
                <SelBox dots="#aaa">
                  <path d="M4 4h7v7H4z" fill="#d8e8d0" />
                </SelBox>
              </ViewIcon>
              <ViewIcon>
                <svg width="16" height="16" viewBox="0 0 16 16">
                  <rect x="1" y="1" width="14" height="14" fill="#fff" stroke="#667" />
                  <rect x="1" y="1" width="14" height="3" fill="#8fb8dc" />
                  <path d="M3 7h2M3 10h2M3 13h2M7 7h6M7 10h6M7 13h6" stroke="#6faf58" strokeWidth="1.500" />
                </svg>
              </ViewIcon>
            </div>
            <div className="flex h-[18px]">
              {["v", "h", "m", "x"].map((k) => (
                <div key={k} className="w-[26px] bg-[#f8f8f8] border border-[#b0b0b0] flex items-center justify-center">
                  {k === "x" ? (
                    <CloseDot />
                  ) : (
                    <svg width="12" height="11" viewBox="0 0 12 11" fill="none" stroke="#000">
                      <rect x="1.500" y="1" width="9" height="9" strokeWidth={k === "m" ? 1.300 : 1} />
                      {k === "v" && <path d="M6 1v9" />}
                      {k === "h" && <path d="M1.500 5.500h9" />}
                    </svg>
                  )}
                </div>
              ))}
            </div>
          </div>

          <div className="ml-[3px] w-[1086px] h-[643px] shrink-0 border-2 border-[#0000ff] bg-[#52566f]">
            <Model />
          </div>
        </div>
      </div>

      {/* status bar */}
      <div className="flex-1 flex items-center bg-[#ebebeb] pl-[704px] relative">
        <div className="w-[22px] h-[22px] shrink-0 bg-[#efefef] border border-[#cfcfcf] flex items-center justify-center">
          <svg width="12" height="12" viewBox="0 0 14 14">
            <path d="M2 2l5 3 5-3 1 2-4 3 4 4-2 2-4-4-4 4-2-2 4-4-4-3z" fill="#f0988a" />
          </svg>
        </div>
        <div className="ml-[1px] w-[675px] h-[6px] rounded-full bg-[#d6d6d6] border border-[#bdbdbd]" />
        <svg className="absolute right-0 bottom-0" width="10" height="12" viewBox="0 0 10 12" fill="none" stroke="#888">
          <path d="M0 12L9 1M4 12l6-7M8 12l2-2" />
        </svg>
      </div>
    </div>
  );
}
